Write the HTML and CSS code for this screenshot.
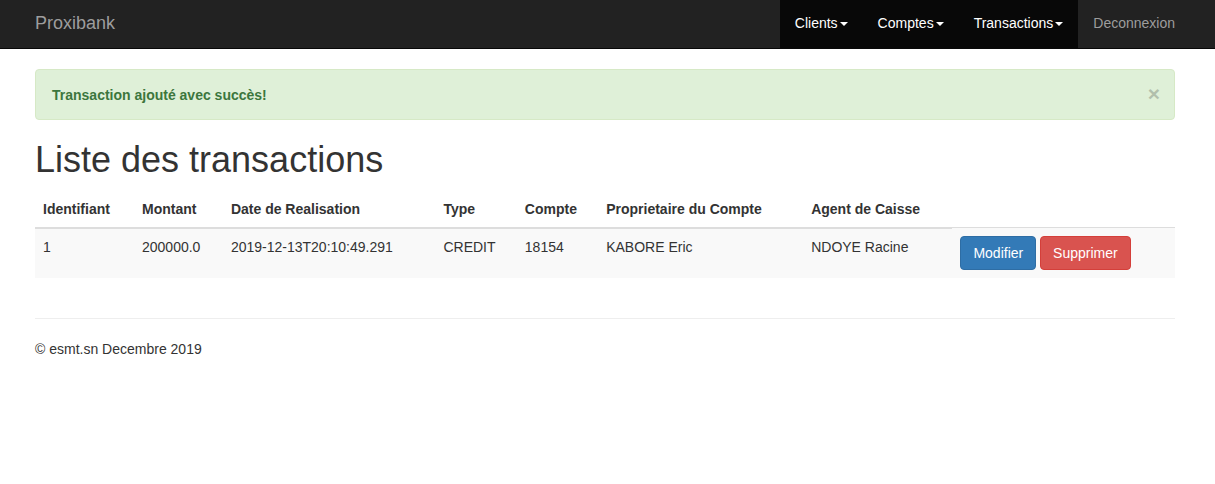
FILE: index.html
```html
<!DOCTYPE html>
<html lang="fr">
<head>
<meta charset="utf-8">
<title>Proxibank</title>
<link rel="stylesheet" href="styles.css">
</head>
<body>
<nav class="navbar">
  <div class="nav-inner">
    <a class="brand" href="#">Proxibank</a>
    <ul class="nav-right">
      <li class="active"><a href="#">Clients<span class="caret"></span></a></li>
      <li class="active"><a href="#">Comptes<span class="caret"></span></a></li>
      <li class="active"><a href="#">Transactions<span class="caret"></span></a></li>
      <li><a href="#" class="muted">Deconnexion</a></li>
    </ul>
  </div>
</nav>
<div class="container">
  <div class="alert">
    <strong>Transaction ajouté avec succès!</strong>
    <button class="close" type="button">&times;</button>
  </div>
  <h1 class="title">Liste des transactions</h1>
  <table class="table">
    <thead>
      <tr>
        <th>Identifiant</th>
        <th>Montant</th>
        <th>Date de Realisation</th>
        <th>Type</th>
        <th>Compte</th>
        <th>Proprietaire du Compte</th>
        <th>Agent de Caisse</th>
      </tr>
    </thead>
    <tbody>
      <tr>
        <td>1</td>
        <td>200000.0</td>
        <td>2019-12-13T20:10:49.291</td>
        <td>CREDIT</td>
        <td>18154</td>
        <td>KABORE Eric</td>
        <td>NDOYE Racine</td>
        <td class="actions"><a class="btn btn-primary" href="#">Modifier</a> <a class="btn btn-danger" href="#">Supprimer</a></td>
      </tr>
    </tbody>
  </table>
  <footer class="footer">
    <p>© esmt.sn Decembre 2019</p>
  </footer>
</div>
</body>
</html>
```
FILE: styles.css
```css
* { box-sizing: border-box; }
html, body { margin: 0; padding: 0; }
body {
  font-family: "Liberation Sans", Arial, Helvetica, sans-serif;
  font-size: 14px;
  line-height: 20px;
  color: #333;
  background: #fff;
}
a { text-decoration: none; }

.navbar {
  background: #222;
  border-bottom: 1px solid #080808;
  height: 49px;
  margin-bottom: 20px;
}
.nav-inner {
  display: flex;
  justify-content: space-between;
  padding: 0 25px 0 20px;
  height: 48px;
}
.brand {
  font-size: 18px;
  line-height: 20px;
  padding: 13px 15px 15px;
  color: #9d9d9d;
}
.nav-right {
  list-style: none;
  margin: 0;
  padding: 0;
  display: flex;
}
.nav-right li a {
  display: block;
  padding: 13px 15px 15px;
  line-height: 20px;
  color: #9d9d9d;
}
.nav-right li.active a {
  background: #080808;
  color: #fff;
}
.caret {
  display: inline-block;
  width: 0;
  height: 0;
  margin-left: 2px;
  vertical-align: middle;
  border-top: 4px solid;
  border-left: 4px solid transparent;
  border-right: 4px solid transparent;
}

.container {
  width: 1140px;
  margin-left: 35px;
}
.alert {
  position: relative;
  padding: 15px 35px 14px 16px;
  border: 1px solid #d6e9c6;
  border-radius: 4px;
  background: #dff0d8;
  color: #3c763d;
  margin-bottom: 20px;
}
.alert strong { font-weight: bold; }
.close {
  position: absolute;
  top: 13px;
  right: 14px;
  padding: 0;
  border: 0;
  background: transparent;
  font-family: "Liberation Sans", Arial, sans-serif;
  font-size: 21px;
  font-weight: bold;
  line-height: 1;
  color: #000;
  opacity: 0.2;
  cursor: pointer;
}
.title {
  font-size: 36px;
  font-weight: 500;
  line-height: 39.6px;
  margin: 20px 0 11px;
  color: #333;
}
.table {
  width: 100%;
  border-collapse: collapse;
  border-spacing: 0;
  margin-bottom: 20px;
}
.table th {
  text-align: left;
  font-weight: bold;
  padding: 8px;
  line-height: 20px;
  border-bottom: 2px solid #ddd;
  vertical-align: bottom;
}
.table td {
  padding: 8px;
  line-height: 20px;
  border-top: 1px solid #ddd;
  vertical-align: top;
}
.table tbody tr:nth-child(odd) { background: #f9f9f9; }
.actions { white-space: nowrap; }
.btn {
  display: inline-block;
  padding: 6px 12px;
  font-size: 14px;
  line-height: 20px;
  border: 1px solid transparent;
  border-radius: 4px;
  color: #fff;
  vertical-align: middle;
}
.btn-primary { background: #337ab7; border-color: #2e6da4; }
.btn-danger { background: #d9534f; border-color: #d43f3a; }

.footer {
  border-top: 1px solid #eee;
  margin-top: 40px;
  padding-top: 20px;
}
.footer p { margin: 0 0 10px; }
```
